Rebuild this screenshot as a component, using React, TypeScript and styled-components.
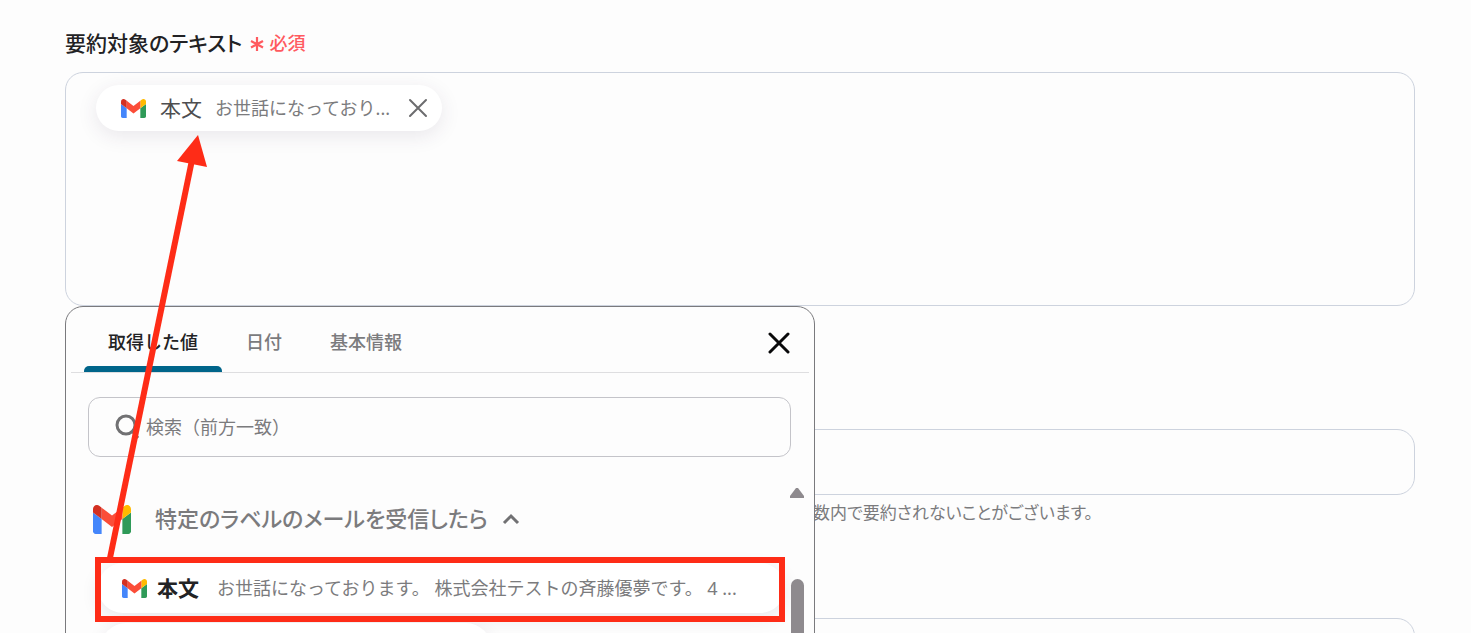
import React from "react";
import styled, { createGlobalStyle } from "styled-components";

const GlobalStyle = createGlobalStyle`
  * { box-sizing: border-box; }
  body {
    margin: 0;
    background: #fdfdfd;
    color: #222224;
    font-family: "Noto Sans", "Noto Sans CJK JP", sans-serif;
  }
  button, input { font-family: inherit; }
`;

const Page = styled.main`
  position: relative;
  height: 100vh;
  overflow: hidden;
  padding: 28px 56px 0 65px;
`;

const FieldLabel = styled.label`
  display: flex;
  align-items: center;
  gap: 8px;
  height: 32px;
  padding-bottom: 2px;
  font-size: 21px;
  line-height: 30px;
  font-weight: 500;
  font-feature-settings: "palt";
`;

const Required = styled.span`
  display: inline-flex;
  align-items: center;
  gap: 5px;
  color: #ff5a5f;
  font-size: 18px;
`;

const FieldAnchor = styled.div`
  position: relative;
  margin-top: 12px;
`;

const TextBox = styled.div`
  min-height: 234px;
  padding: 12px 30px;
  border: 1px solid #cdd3de;
  border-radius: 18px;
`;

const Chip = styled.div`
  display: inline-flex;
  align-items: center;
  height: 46px;
  padding: 0 14px 0 25px;
  border-radius: 23px;
  background: #fff;
  box-shadow: 0 5px 20px rgba(60, 40, 80, 0.1);
`;

const ChipName = styled.span`
  margin-left: 14px;
  padding-bottom: 3px;
  color: #4e4e50;
  font-size: 21px;
`;

const Excerpt = styled.span<{ $gap: number }>`
  margin-left: ${(p) => p.$gap}px;
  padding-bottom: 3px;
  color: #7b7b7d;
  font-size: 18px;
  white-space: pre;
`;

const IconButton = styled.button`
  display: flex;
  padding: 0;
  border: 0;
  background: none;
  cursor: pointer;
`;

const ChipClose = styled(IconButton)`
  margin-left: 18px;
`;

const Popup = styled.section`
  position: absolute;
  z-index: 1;
  top: 234px;
  left: 0;
  width: 750px;
  max-width: 100%;
  height: 420px;
  overflow: hidden;
  border: 1px solid #7a7a7d;
  border-radius: 18px;
  background: #fdfdfd;
`;

const TabBar = styled.div`
  display: flex;
  height: 66px;
  margin: 0 5px;
  padding: 0 19px 0 13px;
  border-bottom: 1px solid #dedee0;
`;

const Tab = styled.button<{ $active?: boolean }>`
  position: relative;
  padding: 3px 24px 0;
  border: 0;
  background: none;
  color: ${(p) => (p.$active ? "#222224" : "#7b7b7d")};
  font-size: 18px;
  font-weight: 500;
  cursor: pointer;

  &::after {
    content: "";
    position: absolute;
    right: 0;
    bottom: 0;
    left: 0;
    height: 6px;
    border-radius: 5px 5px 0 0;
    background: ${(p) => (p.$active ? "#00658a" : "transparent")};
  }
`;

const PopupClose = styled(IconButton)`
  align-items: center;
  margin-left: auto;
  padding-top: 6px;
`;

const SearchBox = styled.label`
  display: flex;
  align-items: center;
  gap: 6px;
  height: 60px;
  margin: 24px 23px 0 22px;
  padding: 0 26px;
  border: 1px solid #c4c4c9;
  border-radius: 12px;
`;

const SearchInput = styled.input`
  flex: 1;
  min-width: 0;
  padding: 0;
  border: 0;
  outline: 0;
  background: none;
  font-size: 18px;

  &::placeholder {
    color: #7b7b7d;
    opacity: 1;
  }
`;

const ResultPane = styled.div`
  display: flex;
  margin: 30px 10px 0 27px;
`;

const Results = styled.div`
  flex: 1;
  min-width: 0;
  padding-top: 12px;
`;

const GroupHeader = styled.button`
  display: flex;
  align-items: center;
  height: 40px;
  padding: 0;
  border: 0;
  background: none;
  color: #7b7b7d;
  font-size: 22px;
  font-weight: 500;
  font-feature-settings: "palt";
  cursor: pointer;
`;

const GroupName = styled.span`
  margin: 0 14px 0 24px;
  padding-bottom: 5px;
`;

const ResultItem = styled.button<{ $short?: boolean }>`
  display: flex;
  align-items: center;
  width: ${(p) => (p.$short ? "390px" : "calc(100% - 10px)")};
  height: 50px;
  margin: ${(p) => (p.$short ? "10px 0 0 8px" : "24px 0 0 5px")};
  padding: 0 24px;
  border: 0;
  border-radius: 25px;
  background: #fff;
  box-shadow: 0 5px 18px rgba(60, 40, 80, 0.1);
  text-align: left;
  cursor: pointer;
`;

const ItemName = styled.span`
  margin-left: 10px;
  padding-bottom: 3px;
  color: #222224;
  font-size: 21px;
  font-weight: 700;
`;

const ScrollTrack = styled.div`
  display: flex;
  flex-direction: column;
  align-items: center;
  gap: 80px;
  width: 14px;
`;

const ScrollThumb = styled.div`
  width: 13px;
  height: 200px;
  border-radius: 7px;
  background: #8e8a8e;
`;

const LineInput = styled.input`
  display: block;
  width: 100%;
  height: 66px;
  padding: 0 30px;
  border: 1px solid #cdd3de;
  border-radius: 18px;
  background: transparent;
  font-size: 18px;
`;

const FollowingFields = styled.div`
  margin-top: 123px;
`;

const HelpText = styled.p`
  margin: 6px 0 93px 748px;
  color: #7b7b7d;
  font-size: 17px;
  line-height: 24px;
  font-feature-settings: "palt";
`;

const Annotation = styled.svg`
  position: absolute;
  z-index: 2;
  top: 0;
  left: 0;
  pointer-events: none;
`;

const GmailIcon = ({ width, height }: { width: number; height: number }) => (
  <svg width={width} height={height} viewBox="52 42 88 66" preserveAspectRatio="none" aria-hidden="true">
    <path fill="#4486fb" d="M58 108h14V74L52 59v43c0 3.32 2.69 6 6 6" />
    <path fill="#2f9a58" d="M120 108h14c3.32 0 6-2.69 6-6V59l-20 15" />
    <path fill="#ffba00" d="M120 48v26l20-15v-8c0-7.42-8.47-11.65-14.4-7.2" />
    <path fill="#fb4d38" d="M72 74V48l24 18 24-18v26L96 92" />
    <path fill="#d33022" d="M52 51v8l20 15V48l-5.6-4.2c-5.94-4.45-14.4-.22-14.4 7.2" />
  </svg>
);

const CloseIcon = ({ size, color, stroke }: { size: number; color: string; stroke: number }) => (
  <svg width={size} height={size} viewBox={`0 0 ${size} ${size}`} aria-hidden="true">
    <path
      d={`M2 2L${size - 2} ${size - 2}M${size - 2} 2L2 ${size - 2}`}
      stroke={color}
      strokeWidth={stroke}
      strokeLinecap="round"
    />
  </svg>
);

export default function App() {
  return (
    <>
      <GlobalStyle />
      <Page>
        <FieldLabel id="target-label">
          要約対象のテキスト
          <Required>
            <svg width="14" height="15" viewBox="0 0 14 15" aria-hidden="true">
              <path d="M7 1v14M1 5l12 6.500M13 5L1 11.500" stroke="#ff5a5f" strokeWidth="2.200" />
            </svg>
            必須
          </Required>
        </FieldLabel>
        <FieldAnchor>
          <TextBox role="group" aria-labelledby="target-label">
            <Chip>
              <GmailIcon width={25} height={19} />
              <ChipName>本文</ChipName>
              <Excerpt $gap={13}>お世話になっており...</Excerpt>
              <ChipClose type="button" aria-label="削除">
                <CloseIcon size={20} color="#6c6c6e" stroke={2} />
              </ChipClose>
            </Chip>
          </TextBox>
          <Popup>
            <TabBar role="tablist">
              <Tab type="button" role="tab" aria-selected="true" $active>取得した値</Tab>
              <Tab type="button" role="tab" aria-selected="false">日付</Tab>
              <Tab type="button" role="tab" aria-selected="false">基本情報</Tab>
              <PopupClose type="button" aria-label="閉じる">
                <CloseIcon size={22} color="#09090a" stroke={3} />
              </PopupClose>
            </TabBar>
            <SearchBox>
              <svg width="25" height="26" viewBox="0 0 25 26" fill="none" stroke="#717173" aria-hidden="true">
                <circle cx="11" cy="11" r="9" strokeWidth="3" />
                <path d="M18 18l5 6" strokeWidth="3" />
              </svg>
              <SearchInput type="text" aria-label="検索" placeholder="検索（前方一致）" />
            </SearchBox>
            <ResultPane>
              <Results>
                <GroupHeader type="button" aria-expanded="true">
                  <GmailIcon width={38} height={29} />
                  <GroupName>特定のラベルのメールを受信したら</GroupName>
                  <svg width="18" height="12" viewBox="0 0 18 12" fill="none" aria-hidden="true">
                    <path d="M2 10L9 3l7 7" stroke="#717173" strokeWidth="3" />
                  </svg>
                </GroupHeader>
                <ResultItem type="button">
                  <GmailIcon width={25} height={19} />
                  <ItemName>本文</ItemName>
                  <Excerpt $gap={18}>お世話になっております。 株式会社テストの斉藤優夢です。 4 ...</Excerpt>
                </ResultItem>
                <ResultItem type="button" $short aria-label="次の値" />
              </Results>
              <ScrollTrack>
                <svg width="14" height="12" viewBox="0 0 14 12" aria-hidden="true">
                  <path d="M6 1h2l6 8v2H0V9z" fill="#8e8a8e" />
                </svg>
                <ScrollThumb />
              </ScrollTrack>
            </ResultPane>
          </Popup>
        </FieldAnchor>
        <FollowingFields>
          <LineInput type="text" aria-label="文字数" />
          <HelpText>数内で要約されないことがございます。</HelpText>
          <LineInput type="text" aria-label="条件" />
        </FollowingFields>
        <Annotation width="800" height="633" viewBox="0 0 800 633" fill="none" aria-hidden="true">
          <rect x="98" y="560" width="684" height="59" stroke="#fe2c17" strokeWidth="6" />
          <path d="M110 558L192 160" stroke="#fe2c17" strokeWidth="6" />
          <path d="M198 135L177 161L207 167z" fill="#fe2c17" />
        </Annotation>
      </Page>
    </>
  );
}
